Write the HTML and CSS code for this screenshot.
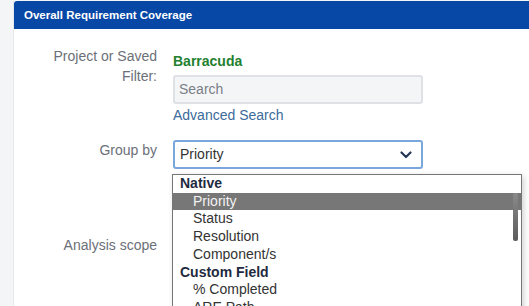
FILE: index.html
```html
<!DOCTYPE html>
<html>
<head>
<meta charset="utf-8">
<link rel="stylesheet" href="styles.css">
</head>
<body>
<div class="panel">
  <div class="panel-header">Overall Requirement Coverage</div>
  <div class="panel-body">
    <div class="form-row row-filter">
      <div class="label">Project or Saved Filter:</div>
      <div class="field">
        <div class="project">Barracuda</div>
        <div class="search-input">Search</div>
        <a class="link">Advanced Search</a>
      </div>
    </div>
    <div class="form-row row-group">
      <div class="label">Group by</div>
      <div class="field">
        <div class="select">
          <span>Priority</span>
          <svg class="chev" width="12" height="8" viewBox="0 0 12 8"><path d="M1.5 1.5 L6 6 L10.5 1.5" fill="none" stroke="#253858" stroke-width="2.2" stroke-linecap="round" stroke-linejoin="round"/></svg>
          <div class="listbox">
            <div class="group">Native</div>
            <div class="option selected">Priority</div>
            <div class="option">Status</div>
            <div class="option">Resolution</div>
            <div class="option">Component/s</div>
            <div class="group">Custom Field</div>
            <div class="option">% Completed</div>
            <div class="option">ARE Path</div>
            <div class="option">Assignee Group</div>
            <div class="thumb"></div>
          </div>
        </div>
      </div>
    </div>
    <div class="form-row row-scope">
      <div class="label">Analysis scope</div>
      <div class="field"></div>
    </div>
  </div>
</div>
</body>
</html>
```
FILE: styles.css
```css
html, body {
  margin: 0;
  padding: 0;
  height: 100%;
  overflow: hidden;
}
body {
  background: #f4f5f7;
  font-family: "Liberation Sans", Arial, sans-serif;
  font-size: 14px;
}
.panel {
  margin: 1px 0 0 13px;
  background: #fff;
  border-left: 1px solid #e6e8ec;
  height: 400px;
}
.panel-header {
  height: 28px;
  line-height: 28px;
  background: #0747a6;
  color: #fff;
  font-weight: bold;
  font-size: 11.5px;
  padding-left: 10px;
  border-top-left-radius: 3px;
}
.panel-body {
  padding-top: 17px;
}
.form-row {
  display: grid;
  grid-template-columns: 143px 1fr;
  column-gap: 16px;
  line-height: 20px;
}
.label {
  color: #6b6f78;
  text-align: right;
  padding-left: 34px;
}
.row-filter .field {
  padding-top: 5px;
}
.project {
  color: #23802f;
  font-weight: bold;
  line-height: 20px;
  margin-bottom: 4px;
}
.search-input {
  width: 250px;
  height: 29px;
  box-sizing: border-box;
  border: 2px solid #dfe1e6;
  border-radius: 3px;
  background: #f4f5f7;
  color: #7a7f88;
  padding-left: 4px;
  line-height: 25px;
}
.link {
  display: block;
  color: #3b6b9a;
  line-height: 22px;
}
.row-group {
  margin-top: 14px;
}
.select {
  position: relative;
  width: 250px;
  height: 29px;
  box-sizing: border-box;
  border: 2px solid #7aa7db;
  border-radius: 3px;
  padding-left: 5px;
  line-height: 25px;
  color: #333;
  display: flex;
  align-items: center;
  justify-content: space-between;
  padding-right: 9px;
}
.chev {
  display: block;
}
.listbox {
  position: absolute;
  top: 32px;
  left: -3px;
  width: 350px;
  height: 160px;
  box-sizing: border-box;
  border: 1px solid #767676;
  background: #fff;
  box-shadow: 2px 2px 6px rgba(0,0,0,0.18);
  overflow: hidden;
  line-height: 17.7px;
  z-index: 5;
}
.group {
  font-weight: bold;
  color: #1f2a40;
  padding-left: 7px;
}
.option {
  color: #333;
  padding-left: 20px;
}
.option.selected {
  background: #777;
  color: #f2f2f2;
}
.thumb {
  position: absolute;
  right: 3px;
  top: 18px;
  width: 5px;
  height: 48px;
  border-radius: 2px;
  background: linear-gradient(#8a8a8a, #5c5c5c);
}
.row-scope {
  margin-top: 66px;
}
```
